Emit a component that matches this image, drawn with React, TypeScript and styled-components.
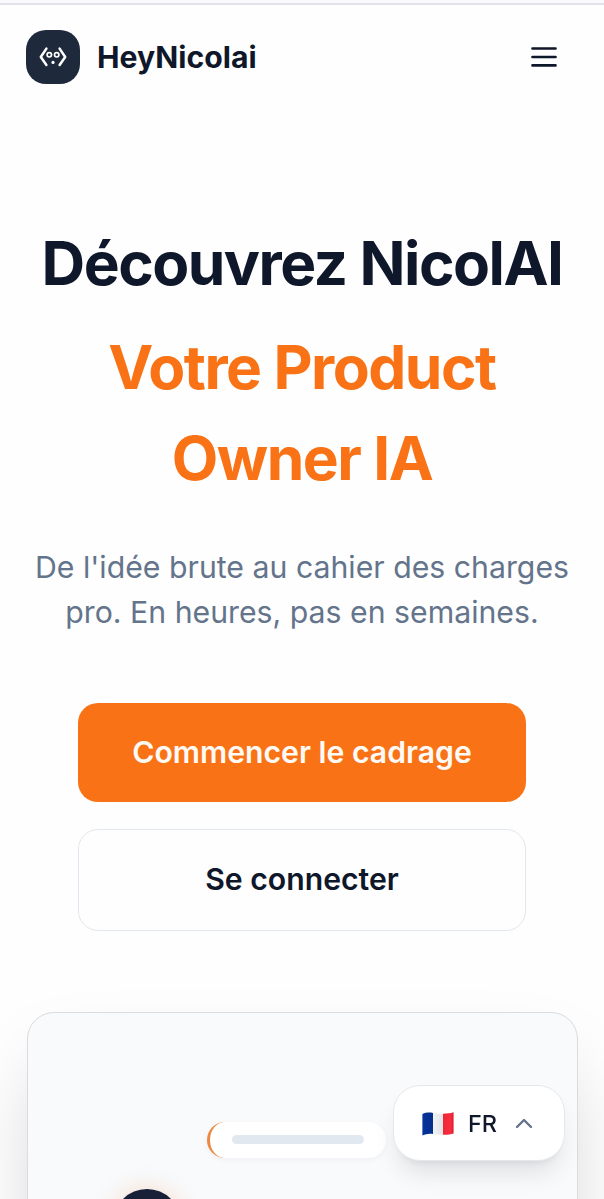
import React from "react";
import styled, { createGlobalStyle } from "styled-components";

const GlobalStyle = createGlobalStyle`
  *, *::before, *::after { box-sizing: border-box; }
  body { margin: 0; background: #fefefe; }
  button { font: inherit; margin: 0; cursor: pointer; }
`;

const Page = styled.div`
  height: 1199px;
  overflow: hidden;
  background: #fefefe;
  color: #0f172a;
  font-family: Inter, "Liberation Sans", sans-serif;
`;

const TopStrip = styled.div`
  height: 5px;
  background: #f9f9fe;
  border-bottom: 2px solid #e3e3eb;
`;

const Header = styled.header`
  height: 104px;
  padding: 0 47px 0 26px;
  display: flex;
  align-items: center;
  justify-content: space-between;
`;

const Brand = styled.div`
  display: flex;
  align-items: center;
  gap: 17px;
`;

const LogoTile = styled.div`
  width: 54px;
  height: 54px;
  border-radius: 20px;
  background: #1e293b;
  display: grid;
  place-items: center;
`;

const BrandName = styled.span`
  font-size: 30.2px;
  line-height: 45px;
  font-weight: 700;
`;

const MenuButton = styled.button`
  padding: 0;
  border: 0;
  background: none;
  display: flex;
`;

const Hero = styled.main`
  padding: 109px 26px 0;
  text-align: center;
`;

const Title = styled.h1`
  margin: 0;
  font-size: 60.4px;
  line-height: 90.6px;
  font-weight: 700;
  letter-spacing: -1.48px;
  white-space: nowrap;
`;

const TitleLine = styled.span<{ $accent?: boolean }>`
  display: block;
  margin-top: ${(p) => (p.$accent ? "13.4px" : "0")};
  color: ${(p) => (p.$accent ? "#f97316" : "#0f172a")};
`;

const Lead = styled.p`
  margin: 41.8px 0 0;
  font-size: 30.25px;
  line-height: 45.3px;
  color: #64748b;
  white-space: nowrap;
`;

const Actions = styled.div`
  width: 448px;
  margin: 67.4px auto 0;
  display: flex;
  flex-direction: column;
  gap: 27px;
`;

const ActionButton = styled.button<{ $primary?: boolean }>`
  height: ${(p) => (p.$primary ? "99px" : "102px")};
  border-radius: 20px;
  border: ${(p) => (p.$primary ? "0" : "1.5px solid #e2e8f0")};
  background: ${(p) => (p.$primary ? "#f97316" : "#fefefe")};
  color: ${(p) => (p.$primary ? "#fffaf5" : "#0f172a")};
  font-size: 30.2px;
  font-weight: 600;
  padding: ${(p) => (p.$primary ? "0" : "0 0 2px")};
`;

const Preview = styled.section`
  height: 560px;
  margin: 81px 0 0 1px;
  padding: 109px 0 0 85px;
  border: 1.5px solid #d9dbde;
  border-radius: 27px;
  background: #f8fafc;
  box-shadow: 0 42px 84px -20px rgba(0, 0, 0, 0.22);
  display: flex;
  align-items: flex-start;
`;

const Avatar = styled.div`
  width: 68px;
  height: 68px;
  margin-top: 67.5px;
  border-radius: 50%;
  background: #172036;
  box-shadow: 0 0 25px rgba(249, 115, 22, 0.22);
`;

const Bubble = styled.div`
  width: 179.5px;
  height: 36px;
  margin-left: 25.5px;
  padding: 0 22px 0 22px;
  border-left: 3px solid #ed8a42;
  border-radius: 18px;
  background: #ffffff;
  box-shadow: 0 2px 6px rgba(15, 23, 42, 0.04);
  display: flex;
  align-items: center;
`;

const BubbleLine = styled.div`
  width: 100%;
  height: 9px;
  border-radius: 5px;
  background: #e2e8f0;
`;

const LanguageButton = styled.button`
  position: fixed;
  top: 1085px;
  left: 393px;
  width: 172px;
  height: 76px;
  padding: 0 0 0 28px;
  border: 1.5px solid #e5e7eb;
  border-radius: 27px;
  background: #ffffff;
  color: #0f172a;
  box-shadow: 0 17px 25px -5px rgba(0, 0, 0, 0.1), 0 7px 10px -7px rgba(0, 0, 0, 0.1);
  display: flex;
  align-items: center;
`;

const Flag = styled.svg`
  margin-top: 2px;
`;

const LanguageCode = styled.span`
  margin-left: 14px;
  margin-right: 18px;
  font-size: 23.5px;
  font-weight: 500;
`;

function LogoMark() {
  return (
    <svg width="30" height="22" viewBox="0 0 30 22" fill="none" stroke="#fff" strokeLinecap="round" strokeLinejoin="round">
      <path d="M8.4 2.6 L2.8 11 L8.4 19 M21.6 2.6 L27.2 11 L21.6 19" strokeWidth="2.5" />
      <circle cx="11.3" cy="8.8" r="2.2" strokeWidth="1.7" />
      <circle cx="18.7" cy="8.8" r="2.2" strokeWidth="1.7" />
      <circle cx="15" cy="16.4" r="1.6" fill="#fff" stroke="none" />
    </svg>
  );
}

function MenuIcon() {
  return (
    <svg width="26" height="22" viewBox="0 0 26 22" stroke="#0f172a" strokeWidth="2.7" strokeLinecap="round">
      <path d="M1.5 2.5H24.5M1.5 11H24.5M1.5 19.4H24.5" />
    </svg>
  );
}

function FrenchFlag() {
  return (
    <Flag width="32" height="24" viewBox="0 0 32 24">
      <defs>
        <linearGradient id="blue" x1="0" x2="1">
          <stop offset="0" stopColor="#04329f" />
          <stop offset="1" stopColor="#06308a" />
        </linearGradient>
        <linearGradient id="white" x1="0" x2="1">
          <stop offset="0" stopColor="#f2f3f5" />
          <stop offset="1" stopColor="#e3e4e8" />
        </linearGradient>
        <linearGradient id="red" x1="0" x2="1">
          <stop offset="0" stopColor="#ee2737" />
          <stop offset="0.7" stopColor="#f92c3e" />
          <stop offset="1" stopColor="#d5202f" />
        </linearGradient>
      </defs>
      <path d="M0.4 2 C4 .4 7.5 .3 11 1 V22 C7 21.3 4 22 .4 23.6Z" fill="url(#blue)" />
      <path d="M11 1 C14.5 1.6 17.5 2.1 21 1.8 V22.7 C17.5 23 14.5 22.6 11 22Z" fill="url(#white)" />
      <path d="M21 1.8 C25 1.7 28 1.3 31.6 .3 V21.5 C28 22.7 25 22.8 21 22.7Z" fill="url(#red)" />
    </Flag>
  );
}

function ChevronUp() {
  return (
    <svg width="18" height="11" viewBox="0 0 18 11" fill="none" stroke="#64748b" strokeWidth="2.4" strokeLinecap="round" strokeLinejoin="round">
      <path d="M2 9 L9 2 L16 9" />
    </svg>
  );
}

export default function App() {
  return (
    <Page>
      <GlobalStyle />
      <TopStrip />
      <Header>
        <Brand>
          <LogoTile>
            <LogoMark />
          </LogoTile>
          <BrandName>HeyNicolai</BrandName>
        </Brand>
        <MenuButton aria-label="Menu">
          <MenuIcon />
        </MenuButton>
      </Header>
      <Hero>
        <Title>
          <TitleLine>Découvrez NicolAI</TitleLine>
          <TitleLine $accent>
            Votre Product
            <br />
            Owner IA
          </TitleLine>
        </Title>
        <Lead>
          De l'idée brute au cahier des charges
          <br />
          pro. En heures, pas en semaines.
        </Lead>
        <Actions>
          <ActionButton $primary>Commencer le cadrage</ActionButton>
          <ActionButton>Se connecter</ActionButton>
        </Actions>
        <Preview>
          <Avatar />
          <Bubble>
            <BubbleLine />
          </Bubble>
        </Preview>
      </Hero>
      <LanguageButton>
        <FrenchFlag />
        <LanguageCode>FR</LanguageCode>
        <ChevronUp />
      </LanguageButton>
    </Page>
  );
}
